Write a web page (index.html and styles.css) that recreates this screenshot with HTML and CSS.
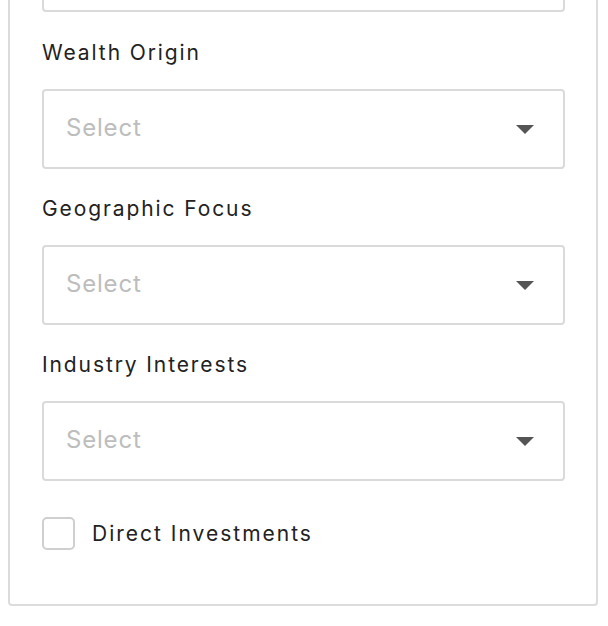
FILE: index.html
```html
<!DOCTYPE html>
<html>
<head>
<meta charset="utf-8">
<link rel="stylesheet" href="styles.css">
</head>
<body>
<div class="card">
  <div class="field top-field"></div>
  <div class="group">
    <label class="label">Wealth Origin</label>
    <div class="select"><span class="placeholder">Select</span><span class="caret"></span></div>
  </div>
  <div class="group">
    <label class="label">Geographic Focus</label>
    <div class="select"><span class="placeholder">Select</span><span class="caret"></span></div>
  </div>
  <div class="group">
    <label class="label">Industry Interests</label>
    <div class="select"><span class="placeholder">Select</span><span class="caret"></span></div>
  </div>
  <div class="check-row">
    <span class="checkbox"></span>
    <span class="check-label">Direct Investments</span>
  </div>
</div>
</body>
</html>
```
FILE: styles.css
```css
html, body {
  margin: 0;
  padding: 0;
  background: #fff;
  overflow: hidden;
}
body {
  font-family: Inter, "Liberation Sans", sans-serif;
  color: #222;
}
.card {
  margin: -100px 0 0 8px;
  width: 590px;
  box-sizing: border-box;
  border: 2px solid #dcdcdc;
  border-radius: 4px;
  padding: 30px 31px 54px 32px;
}
.field, .select {
  box-sizing: border-box;
  height: 80px;
  border: 2px solid #dadada;
  border-radius: 4px;
}
.group {
  display: flex;
  flex-direction: column;
  margin-top: 29px;
}
.group + .group {
  margin-top: 28px;
}
.label {
  font-size: 21px;
  line-height: 24px;
  letter-spacing: 1.9px;
  color: #222;
  margin-bottom: 24px;
}
.select {
  display: flex;
  align-items: center;
  justify-content: space-between;
  padding: 0 29px 0 22px;
}
.placeholder {
  font-size: 24px;
  color: #bdbdbd;
  letter-spacing: 0.8px;
  margin-bottom: 3px;
}
.caret {
  width: 0;
  height: 0;
  border-left: 9px solid transparent;
  border-right: 9px solid transparent;
  border-top: 9px solid #555;
}
.check-row {
  display: flex;
  align-items: center;
  gap: 17px;
  margin-top: 36px;
}
.checkbox {
  box-sizing: border-box;
  width: 33px;
  height: 33px;
  border: 2px solid #cfcfcf;
  border-radius: 5px;
}
.check-label {
  font-size: 21px;
  letter-spacing: 2px;
  color: #222;
  margin-bottom: 1px;
}
```
